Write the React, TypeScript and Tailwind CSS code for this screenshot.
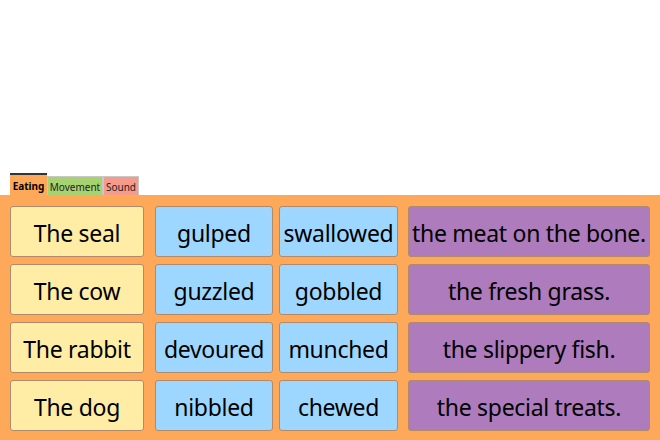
const rows = [
  ["The seal", "gulped", "swallowed", "the meat on the bone."],
  ["The cow", "guzzled", "gobbled", "the fresh grass."],
  ["The rabbit", "devoured", "munched", "the slippery fish."],
  ["The dog", "nibbled", "chewed", "the special treats."],
];

function Card({ text, className }: { text: string; className: string }) {
  return (
    <div
      className={`h-[51px] pt-[3px] flex items-center justify-center rounded-[3px] border border-[#b08a6a] text-[23px] tracking-[-0.3px] text-black whitespace-nowrap overflow-hidden ${className}`}
    >
      {text}
    </div>
  );
}

export default function App() {
  return (
    <div className="w-[660px] h-[440px] bg-white flex flex-col" style={{ fontFamily: '"Noto Sans", "Open Sans", sans-serif' }}>
      <div className="h-[173px]" />
      <div className="flex items-end pl-[10px] h-[22px] text-[10px] leading-none">
        <div className="w-[37px] h-[22px] pt-[1px] bg-[#fea85a] border-t-2 border-[#333] flex items-center justify-center font-bold text-black">
          Eating
        </div>
        <div className="w-[56px] h-[19px] pt-[1px] bg-[#a6d270] border border-b-0 border-[#c8c8c8] flex items-center justify-center text-[#222]">
          Movement
        </div>
        <div className="w-[36px] h-[19px] pt-[1px] bg-[#f59b8b] border border-b-0 border-[#c8c8c8] flex items-center justify-center text-[#222]">
          Sound
        </div>
      </div>
      <div className="flex-1 bg-[#fea85a] pl-[10px] pt-[11px] flex flex-col gap-[7px]">
        {rows.map((r) => (
          <div key={r[0]} className="flex">
            <Card text={r[0]} className="w-[134px] bg-[#ffeda6]" />
            <Card text={r[1]} className="w-[118px] ml-[11px] bg-[#9dd7ff]" />
            <Card text={r[2]} className="w-[119px] ml-[6px] bg-[#9dd7ff]" />
            <Card text={r[3]} className="w-[242px] ml-[10px] bg-[#ae7bbd] border-[#8a5a90]" />
          </div>
        ))}
      </div>
    </div>
  );
}
